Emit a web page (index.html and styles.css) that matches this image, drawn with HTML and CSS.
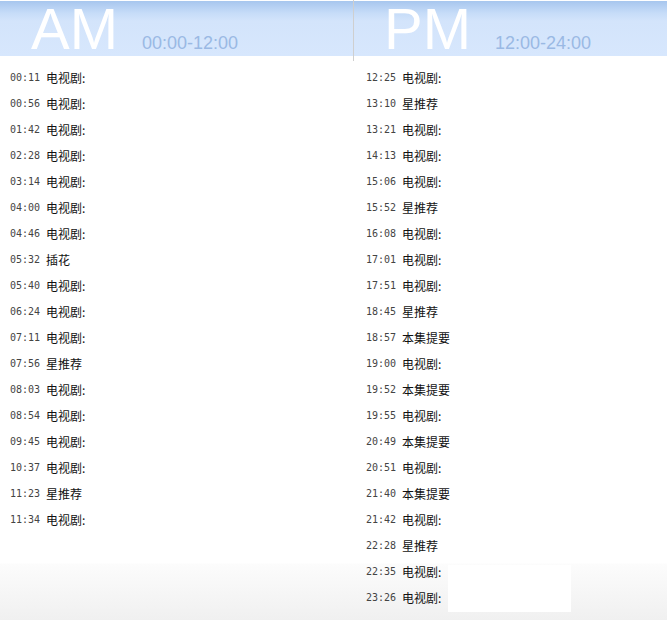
FILE: index.html
```html
<!DOCTYPE html>
<html lang="zh-CN">
<head>
  <meta charset="UTF-8" />
  <title>节目单</title>
  <link rel="stylesheet" href="styles.css">
</head>
<body>

  <div class="schedule">
    <div class="col am">
      <div class="head">
        <span class="half">AM</span>
        <span class="range">00:00-12:00</span>
      </div>
      <ul class="list">
        <li><span class="time">00:11</span>电视剧:</li>
        <li><span class="time">00:56</span>电视剧:</li>
        <li><span class="time">01:42</span>电视剧:</li>
        <li><span class="time">02:28</span>电视剧:</li>
        <li><span class="time">03:14</span>电视剧:</li>
        <li><span class="time">04:00</span>电视剧:</li>
        <li><span class="time">04:46</span>电视剧:</li>
        <li><span class="time">05:32</span>插花</li>
        <li><span class="time">05:40</span>电视剧:</li>
        <li><span class="time">06:24</span>电视剧:</li>
        <li><span class="time">07:11</span>电视剧:</li>
        <li><span class="time">07:56</span>星推荐</li>
        <li><span class="time">08:03</span>电视剧:</li>
        <li><span class="time">08:54</span>电视剧:</li>
        <li><span class="time">09:45</span>电视剧:</li>
        <li><span class="time">10:37</span>电视剧:</li>
        <li><span class="time">11:23</span>星推荐</li>
        <li><span class="time">11:34</span>电视剧:</li>
      </ul>
    </div>

    <div class="col pm">
      <div class="head">
        <span class="half">PM</span>
        <span class="range">12:00-24:00</span>
      </div>
      <ul class="list">
        <li><span class="time">12:25</span>电视剧:</li>
        <li><span class="time">13:10</span>星推荐</li>
        <li><span class="time">13:21</span>电视剧:</li>
        <li><span class="time">14:13</span>电视剧:</li>
        <li><span class="time">15:06</span>电视剧:</li>
        <li><span class="time">15:52</span>星推荐</li>
        <li><span class="time">16:08</span>电视剧:</li>
        <li><span class="time">17:01</span>电视剧:</li>
        <li><span class="time">17:51</span>电视剧:</li>
        <li><span class="time">18:45</span>星推荐</li>
        <li><span class="time">18:57</span>本集提要</li>
        <li><span class="time">19:00</span>电视剧:</li>
        <li><span class="time">19:52</span>本集提要</li>
        <li><span class="time">19:55</span>电视剧:</li>
        <li><span class="time">20:49</span>本集提要</li>
        <li><span class="time">20:51</span>电视剧:</li>
        <li><span class="time">21:40</span>本集提要</li>
        <li><span class="time">21:42</span>电视剧:</li>
        <li><span class="time">22:28</span>星推荐</li>
        <li><span class="time">22:35</span>电视剧:</li>
        <li><span class="time">23:26</span>电视剧:</li>
      </ul>
      <div class="blank"></div>
    </div>
  </div>

</body>
</html>
```

FILE: styles.css
```css
* {
  box-sizing: border-box;
  margin: 0;
  padding: 0;
}

html, body {
  height: 620px;
  overflow: hidden;
}

body {
  font-family: "Noto Sans CJK SC", sans-serif;
  color: #222;
  background: linear-gradient(to bottom, #fff 0, #fff 563px, #fcfcfc 564px, #f0f0f0 620px);
}

.schedule {
  display: flex;
}

.col {
  position: relative;
}

.am {
  width: 353px;
}

.pm {
  flex: 1;
  padding-left: 1px;
}

/* thin divider between the two halves */
.pm::before {
  content: "";
  position: absolute;
  top: 0;
  left: 0;
  width: 1px;
  height: 61px;
  background: #cfcfcf;
}

.head {
  height: 55px;
  margin-top: 1px;
  display: flex;
  align-items: flex-end;
  gap: 24px;
  padding: 0 0 6px 31px;
  background: linear-gradient(to bottom, #a7c6ee 0, #c6dcf8 12px, #d3e4fb 20px, #d7e7fd 100%);
}

.pm .head {
  padding-left: 30px;
}

.half {
  font-family: "Liberation Sans", Arial, sans-serif;
  font-size: 58px;
  line-height: 42px;
  color: #fff;
}

.range {
  font-family: "Liberation Sans", Arial, sans-serif;
  font-size: 18px;
  line-height: 14px;
  color: #9ab9e4;
}

.list {
  list-style: none;
  padding: 8px 0 0 10px;
}

.pm .list {
  padding-left: 12px;
}

.list li {
  display: flex;
  align-items: center;
  height: 26px;
  font-size: 12px;
  color: #111;
}

.time {
  font-family: "DejaVu Sans Mono", monospace;
  font-size: 10px;
  color: #444;
  width: 36px;
}

.blank {
  position: absolute;
  left: 95px;
  top: 565px;
  width: 123px;
  height: 47px;
  background: #fff;
}
```
